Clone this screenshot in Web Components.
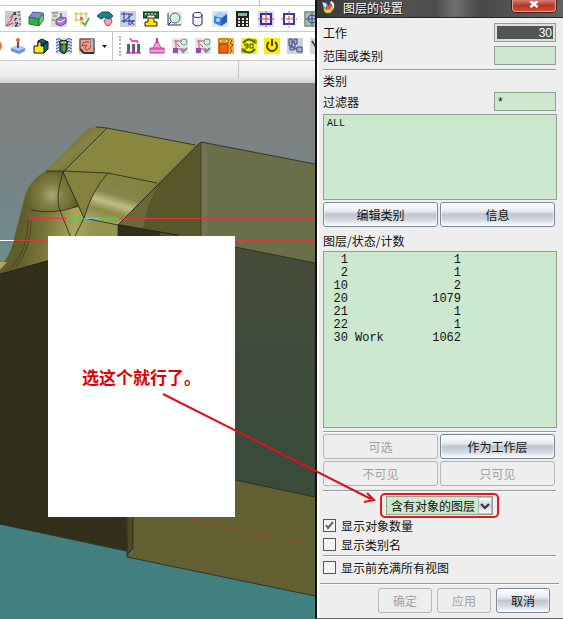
<!DOCTYPE html>
<html lang="zh-CN">
<head>
<meta charset="utf-8">
<title>图层的设置</title>
<style>
body{margin:0;font:12px/16px "Liberation Sans","Noto Sans CJK SC",sans-serif;color:#111}
</style>
</head>
<body>
<cad-app></cad-app>
<script>
const define=(name,html,setup)=>customElements.define(name,class extends HTMLElement{
  constructor(){
    super();
    const t=document.createElement('template');
    t.innerHTML=html;
    this.attachShadow({mode:'open'}).append(t.content.cloneNode(true));
  }
  connectedCallback(){if(setup)setup(this,this.shadowRoot)}
});

/* 16x16 toolbar glyphs */
const sq=c=>`<rect width="16" height="16" fill="${c}"/>`;
const icons={
  xyz:sq('#c9c9cf')+'<path d="M1 15L6 9L9 2M1 15L8 12M5 7L9 2" stroke="#d23c50" fill="none"/><path d="M9 1l2 3M11 1l-2 3M10 7l1 1 1-1M10 8v2M10 12h3l-3 3h3" stroke="#222" fill="none"/><path d="M13 1h2M13 4h2M14 8h2M14 13h2" stroke="#445"/>',
  box:'<path d="M1 6L5 1L15 2L11 8Z" fill="#8a86dc" stroke="#555a96"/><path d="M1 6L11 8V15L1 13Z" fill="#35ad47" stroke="#247a35"/><path d="M11 8L15 2L16 8L11 15Z" fill="#63d166" stroke="#247a35"/>',
  feat:sq('#dedce0')+'<path d="M1 2h6M2 5h4M1 9h3" stroke="#a7ab78" stroke-width="2"/><path d="M5 9l4-3 6 1v5l-5 3-5-2z" fill="#a97bc8" stroke="#6f4a98"/><path d="M6 10l4 1 4-3" stroke="#fff" fill="none"/><path d="M10 6V2" stroke="#8070a0" stroke-width="2"/>',
  grid:'<path d="M2 1V11M7 1V14M12 1V8M0 3H14M0 9H10" stroke="#e2b04e" fill="none"/><path d="M6 6h3v3H6z" fill="#e36a5a"/><path d="M8 11l3 3 4-7" stroke="#60b255" stroke-width="2" fill="none"/>',
  sheet:'<path d="M9 7l5 0 1 4-3 4-3-1-2-4z" fill="#f0a6b2" stroke="#a3506a"/><path d="M0 5L5 1L12 1L16 5L12 8L8 6L4 8Z" fill="#16838f" stroke="#0b4f61"/>',
  csys:sq('#cdd0df')+'<path d="M4 1V12M1 10H15M1 3L12 3M4 10L13 3M9 3V14M10 9l4 5M14 9l-4 5" stroke="#1d3ba6" fill="none"/>',
  caliper:'<path d="M0 1H16V7H12V4H4V7H0Z" fill="#167636" stroke="#111"/><path d="M3 2v2M6 2v2M9 2v2M12 2v2" stroke="#fff"/><path d="M5 7h6v4h3v4H2v-4h3z" fill="#ffe500" stroke="#222"/>',
  circ:'<rect x="2" width="14" height="14" fill="#e8eee9"/><path d="M2 2V14H15" stroke="#222a88" fill="none"/><circle cx="9" cy="7" r="5" fill="#d9f1df" stroke="#387261"/><path d="M2 14L5 11" stroke="#222a88"/>',
  cyl:'<path d="M4 4V13Q8 17 13 13V4" fill="#f4f4ff" stroke="#20206d"/><ellipse cx="8.500" cy="4" rx="4.500" ry="2.500" fill="#fff" stroke="#20206d"/>',
  cube:sq('#dfe5f1')+'<path d="M2 5l5-4 8 2v8l-6 4-7-3z" fill="#3d84dc"/><path d="M2 5l5-4 8 2-5 4z" fill="#a8d0f7"/><path d="M10 7l5-4v8l-6 4z" fill="#2160bb"/><circle cx="6" cy="9" r="2" fill="#b5dafa"/>',
  calc:'<rect x="1" width="13" height="16" fill="#232322"/><rect x="3" y="2" width="9" height="3" fill="#75bf8b"/><path d="M3 8h10M3 11h10M3 14h10" stroke="#f2e8d8" stroke-width="2" stroke-dasharray="2 2"/>',
  cross:sq('#dcd8e2')+'<rect x="3" y="3" width="10" height="10" fill="#eef" stroke="#2930a5" stroke-width="2"/><path d="M8 0V16M0 8H16" stroke="#df3a3a"/>',
  cross2:'<rect x="3" y="3" width="10" height="10" fill="#fff" stroke="#3438aa" stroke-width="2"/><path d="M8 0V16M0 8H16" stroke="#df3a3a" stroke-dasharray="4 1"/>',
  target:sq('#a8bea8')+'<circle cx="8" cy="8" r="4" fill="none" stroke="#3d48a4"/><path d="M8 1V15M1 8H15" stroke="#3d48a4"/><path d="M1 1h14v14H1z" fill="none" stroke="#6a8a75"/>',
  orange:'<circle cx="9" cy="8" r="6" fill="#ee7547"/>',
  joy:'<path d="M1 10l7-3 7 3v3l-6 3-8-3z" fill="#5d91dd"/><path d="M1 10l7-3 7 3-6 3z" fill="#b0cdf2"/><path d="M8 10V3" stroke="#8d443b" stroke-width="2"/><circle cx="8" cy="2" r="2" fill="#d9654e"/>',
  pad:'<path d="M5 3L9 1L15 4V11L11 15L5 12Z" fill="#087565" stroke="#111"/><path d="M10 6l5-2M10 6v8" stroke="#111a88" stroke-width="2"/><path d="M1 8h4V4h3v4h3v7H1z" fill="#ffe52e" stroke="#111"/>',
  thread:sq('#d4d9ee')+'<path d="M0 2q3-3 5 0t5 0 6 0M0 5q3-3 5 0t5 0 6 0M0 8q3-3 5 0t5 0 6 0M0 11q3-3 5 0t5 0 6 0M0 14q3-3 5 0t5 0 6 0" fill="none" stroke="#2856bb"/><path d="M4 3h7v9l-3 4-4-3z" fill="#298342" stroke="#111"/><path d="M4 3h7v3H4z" fill="#e6da57" stroke="#111"/><path d="M8 6v7" stroke="#8fc65c"/>',
  cavity:sq('#d5ccc8')+'<path d="M1 1h14v14H5L1 11z" fill="#e9a091" stroke="#3d3333"/><path d="M10 4H6Q3 5 3 8L8 7Q4 12 8 12Q12 11 12 7V2" fill="none" stroke="#a3433e"/><path d="M13 1v9" stroke="#9cc7c2" stroke-width="2"/><path d="M1 11l4 4h10" fill="none" stroke="#3d3333" stroke-width="2"/>',
  plant:'<path d="M1 15V6h3v9zM6 15V6h3v9zM11 15V6h3v9z" fill="#b431b4"/><path d="M3 6v6M8 6v6M13 6v6" stroke="#21863c" stroke-width="2"/><path d="M4 0l2 3h5l1 2" stroke="#e355c8" fill="none" stroke-width="2"/><path d="M0 15h15" stroke="#71286a"/>',
  cake:'<path d="M1 10h14v5H1z" fill="#e46ac5" stroke="#bd3f98"/><path d="M4 10l3-6h2l3 6z" fill="#f39bd5" stroke="#d14da9"/><path d="M8 0v5" stroke="#ce337a" stroke-width="2"/><path d="M1 13h14" stroke="#fbd4ee"/>',
  tree:sq('#e8e3e9')+'<path d="M2 3h7M4 3v8h8M5 6l3 3" stroke="#c24d6c" fill="none"/><circle cx="12" cy="4" r="3" fill="#d5f1d7" stroke="#55ad70"/><path d="M1 10h5v5H1z" fill="#8a54a3"/><path d="M9 11l2 3 4-4" stroke="#7e8c9e" fill="none" stroke-width="2"/>',
  post:sq('#f5b025')+'<path d="M1 1h9v4H1z" fill="#ffe77a" stroke="#8b4a16"/><path d="M1 6h9v9H1z" fill="#ef6413" stroke="#b53508"/><path d="M12 1l2 2-2 2 3 2-3 3 2 2-2 3" stroke="#a23b19" fill="none"/><path d="M3 3h5" stroke="#c45b15"/>',
  rotate:sq('#ffee21')+'<path d="M2 5Q8-2 14 5M14 11Q8 18 2 11" fill="none" stroke="#38751d" stroke-width="2"/><path d="M12 2h3v4M4 14H1v-4" fill="none" stroke="#38751d"/><path d="M7 8H4V6h3v4H4M9 6h3v4H9z" fill="none" stroke="#554313"/>',
  power:sq('#ffee00')+'<path d="M5 4A5 5 0 1 0 11 4M8 1V8" fill="none" stroke="#514600" stroke-width="2"/>',
  comps:sq('#cfd2de')+'<path d="M2 1h3v7H2zM7 1h3v5H7zM3 9h4v3H3zM10 9h5v5h-5z" fill="#a8b3d5" stroke="#303f82"/><path d="M5 4h2M8 6v5h2M5 8v1" stroke="#303f82" fill="none"/>',
  hammer:sq('#d8d8d8')+'<path d="M2 3l6 9" stroke="#444" stroke-width="2"/>',
  logo:'<path d="M2 3Q7 1 8 7T14 12L10 15Q2 14 2 3Z" fill="#3bb7e9"/><path d="M3 9Q8 12 14 5Q15 15 7 15Q3 14 3 9Z" fill="#b8db36"/><path d="M3 6Q8 10 11 3L13 5Q12 11 6 11Z" fill="#ed3d85"/><path d="M1 2L6 5L5 9ZM12 1Q17 4 14 11Q14 5 10 3Z" fill="#eef8ff"/><path d="M4 12Q9 15 14 8" stroke="#ffce25" stroke-width="2" fill="none"/>',
  caret:'<path d="M0 8h5l-2.500 3z" fill="#111"/>'
};

define('tool-icon',`<style>
:host{display:block;flex:none;width:16px;height:16px}
button{display:block;width:100%;height:100%;padding:0;border:0;background:none}
svg{display:block;width:100%;height:100%}
</style><button type="button"><svg></svg></button>`,(el,r)=>{
  const s=r.querySelector('svg'),n=el.getAttribute('name');
  s.setAttribute('viewBox',el.getAttribute('view')||'0 0 16 16');
  s.innerHTML=icons[n];
  r.querySelector('button').setAttribute('aria-label',n);
});

define('tool-row',`<style>
:host{display:flex;align-items:center;overflow:hidden;background:#fff;border-bottom:1px solid #c9c9c9;box-sizing:border-box}
div{display:flex;flex:none;gap:7px}
.grip{width:17px;height:100%;box-sizing:border-box;gap:0;padding-left:3px;align-items:center}
.grip i{height:28px;border-left:1px solid #c4c4c4;margin-right:6px}
.grip b{height:20px;border-left:2px dotted #b5b5b5}
[hidden]{display:none}
</style><div><slot></slot></div><div class="grip"><i></i><b></b></div><div><slot name="more"></slot></div>`,(el,r)=>{
  if(!el.querySelector('[slot=more]'))r.querySelector('.grip').hidden=true;
});

define('cad-toolbars',`<style>
:host{display:block;min-width:0}
.edge{height:5px;background:#fff;border-bottom:1px solid #c9c9c9;display:flex;justify-content:flex-end}
.edge i{border-left:1px solid #c4c4c4;width:55px}
tool-row{height:26px;padding-left:5px}
.second{height:29px;padding-left:0}
.second .part{width:3px}
.second .arrow{width:5px;margin-right:2px}
.status{height:22px;background:linear-gradient(#f8f8f8,#e9e9e9 70%,#cfcfcf);display:flex;justify-content:flex-end}
.status i{width:76px;height:18px;border-left:1px solid #c6c6c6}
</style>
<div class="edge"><i></i></div>
<tool-row>${['xyz','box','feat','grid','sheet','csys','caliper','circ','cyl','cube','calc','cross','cross2','target'].map(n=>`<tool-icon name="${n}"></tool-icon>`).join('')}</tool-row>
<tool-row class="second"><tool-icon class="part" name="orange" view="13 0 3 16"></tool-icon>${['joy','pad','thread','cavity'].map(n=>`<tool-icon name="${n}"></tool-icon>`).join('')}<tool-icon class="arrow" name="caret" view="0 1 5 16"></tool-icon>${['plant','cake','tree','tree','post','rotate','power','comps','hammer'].map(n=>`<tool-icon slot="more" name="${n}"></tool-icon>`).join('')}</tool-row>
<div class="status"><i></i></div>`);

define('cad-scene',`<style>
:host{display:block;position:relative;min-height:0;min-width:0;overflow:hidden;background:#41807f}
svg{position:absolute;inset:0;display:block;width:100%;height:100%}
</style>
<svg viewBox="0 83 315 536" preserveAspectRatio="xMinYMin slice" role="img" aria-label="三维模型">
<defs>
<linearGradient id="sky" x2="0" y2="1"><stop stop-color="#808080"/><stop offset=".12" stop-color="#7b8383"/><stop offset=".35" stop-color="#6b8c90"/><stop offset=".8" stop-color="#43807f"/><stop offset="1" stop-color="#408080"/></linearGradient>
<linearGradient id="green" x2="0" y2="1"><stop stop-color="#484b3b"/><stop offset=".5" stop-color="#3e4b3a"/><stop offset="1" stop-color="#394b39"/></linearGradient>
<linearGradient id="round" x1="0" y1="0" x2="1" y2="1"><stop stop-color="#5d5b2a"/><stop offset=".5" stop-color="#858341"/><stop offset="1" stop-color="#6c692f"/></linearGradient>
<linearGradient id="shine" gradientUnits="userSpaceOnUse" x1="115" y1="178" x2="102" y2="222"><stop stop-color="#858341"/><stop offset=".35" stop-color="#88864a"/><stop offset=".55" stop-color="#c1bd86"/><stop offset=".75" stop-color="#8d8948"/><stop offset="1" stop-color="#aaa65f"/></linearGradient>
<linearGradient id="skirt" gradientUnits="userSpaceOnUse" x1="20" y1="235" x2="90" y2="245"><stop stop-color="#5f5d2a"/><stop offset=".35" stop-color="#787638"/><stop offset=".75" stop-color="#aaa763"/><stop offset="1" stop-color="#969250"/></linearGradient>
<radialGradient id="ball" gradientUnits="userSpaceOnUse" cx="52" cy="195" r="29"><stop stop-color="#aaa875"/><stop offset=".4" stop-color="#817e43"/><stop offset="1" stop-color="#5c5929"/></radialGradient>
</defs>
<rect y="83" width="315" height="536" fill="url(#sky)"/>
<path d="M0 262L6 261Q12 250 15 235L24 198Q28 181 46 171L80 137Q87 127 96 127L107 128L195 145L201 142V240H48L0 275Z" fill="#777538"/>
<path d="M201 142L315 164V264L235 247L201 240Z" fill="#6a6e49"/>
<path d="M96 127L107 128L63 172H46L80 137Q87 127 96 127Z" fill="url(#round)"/>
<path d="M107 128L195 145L157 183L108 173L63 172Z" fill="#89873f"/>
<path d="M63 172L108 173L157 183L118 225L84 218Z" fill="url(#shine)"/>
<path d="M63 172L108 173Q92 190 84 218Z" fill="#84823d"/>
<path d="M46 171H63L79 206Q50 218 29 210Q24 204 25 197Q30 180 46 171Z" fill="url(#ball)"/>
<path d="M25 198Q28 211 45 213L78 207L84 218L118 225V242H48V261L0 275V267Q11 256 15 235Z" fill="url(#skirt)"/>
<path d="M0 262H7L0 270Z" fill="#aaa65f"/>
<path d="M201 142L118 225L178 236L207 240Z" fill="#58582c"/>
<path d="M160 183L118 225L143 230Q145 205 160 183Z" fill="#6b693a"/>
<path d="M201 142V237L207 240V147Z" fill="#727351"/>
<path d="M0 274L118 240V224L178 235L150 545L128 551L0 524Z" fill="#32301a"/>
<path d="M160 232L235 247L315 263V497L235 480L160 470Z" fill="url(#green)"/>
<path d="M133 480L235 480L315 497V596L127 557L133 552Z" fill="#636033"/>
<path d="M126 517H133V549L127 557Z" fill="#4d4b25"/>
<g fill="none" stroke="#25251a">
<path d="M96 127L107 128L195 145M201 142L315 164M201 142L118 225M107 128L63 172M46 171H63L108 173L157 183M63 172L84 218L118 225V238M63 172Q54 200 61 213L71 238M108 173Q92 190 84 218L74 238M78 206Q55 215 31 210M118 225L178 235M235 247L315 263M235 480L315 497M0 524L126 551M127 517V557L315 596M133 517V549L128 553M0 274L48 261" stroke-opacity=".8"/>
<path d="M28 220Q28 250 12 267M31 221Q31 249 16 266M201 142V237" stroke-opacity=".5"/>
</g>
<path d="M28 218.500H315M14 240.500H315" stroke="#d43b3b"/>
<path d="M67 218.500H83M99 218.500H119" stroke="#55cc45"/><path d="M84 218.500H99" stroke="#70cadb"/>
<path d="M0 240.500H14" stroke="#fff"/>
<path d="M180 518L304 544" stroke="#b13c25" stroke-dasharray="22 11" stroke-dashoffset="-8"/>
</svg>`);

define('paper-note',`<style>
:host{display:flex;align-items:center;justify-content:center;background:#fff;color:#e00000;font:bold 17px/24px "Noto Sans CJK SC",sans-serif;white-space:nowrap}
</style><slot></slot>`);

define('field-row',`<style>
:host{display:block}
label{display:flex;align-items:center;justify-content:space-between;min-height:19px}
:host([bare]) label{min-height:17px}
input{box-sizing:border-box;width:62px;height:19px;margin:0;padding:0 3px;border:1px solid #8fa191;border-radius:0;background:#cce8cf;color:#111;font:12px/16px "Liberation Sans",sans-serif;outline:0}
:host([active]) input{text-align:right;background:#525552;color:#fff;box-shadow:inset 0 0 0 2px #dde3de;padding-right:3px}
</style><label><slot></slot><input type="text"></label>`,(el,r)=>{
  const i=r.querySelector('input');
  if(el.hasAttribute('value'))i.value=el.getAttribute('value');else if(el.hasAttribute('bare'))i.remove();
});

define('metal-button',`<style>
:host{display:block;min-width:0}
button{display:block;box-sizing:border-box;width:100%;height:25px;padding:0;border:1px solid #7a8a99;border-radius:3px;background:linear-gradient(#fff,#e8ebef 35%,#bfc6d0 50%,#cfd5dd 70%,#fff);color:#111;font:12px/16px "Noto Sans CJK SC",sans-serif;box-shadow:inset 0 0 0 1px #ffffff80}
button:disabled{background:#eee;color:#a2a2a2;border-color:#b5b5b5;box-shadow:none}
</style><button type="button"><slot></slot></button>`,(el,r)=>{r.querySelector('button').disabled=el.hasAttribute('disabled')});

define('check-row',`<style>
:host{display:block}
label{display:flex;align-items:center;gap:5px;height:19px}
input{appearance:none;box-sizing:border-box;width:13px;height:13px;margin:0;border:1px solid #555;background:#f4f4f4}
input:checked{background:#f4f4f4 url("data:image/svg+xml,%3Csvg xmlns='http://www.w3.org/2000/svg' viewBox='0 0 11 11'%3E%3Cpath d='M2 5L4 8L9 2' fill='none' stroke='%23666' stroke-width='2'/%3E%3C/svg%3E")}
</style><label><input type="checkbox"><slot></slot></label>`,(el,r)=>{r.querySelector('input').checked=el.hasAttribute('checked')});

define('layer-filter',`<style>
:host{display:block;border:2px solid #e01822;border-radius:5px;padding:1px 4px}
select{display:block;appearance:none;box-sizing:border-box;width:107px;height:19px;padding:0 0 0 4px;border:1px solid #8fa191;border-radius:0;color:#111;font:12px/16px "Noto Sans CJK SC",sans-serif;
background:url("data:image/svg+xml,%3Csvg xmlns='http://www.w3.org/2000/svg' viewBox='0 0 14 17'%3E%3Cdefs%3E%3ClinearGradient id='g' x2='0' y2='1'%3E%3Cstop stop-color='white'/%3E%3Cstop offset='.5' stop-color='%23ccd3dc'/%3E%3Cstop offset='1' stop-color='white'/%3E%3C/linearGradient%3E%3C/defs%3E%3Cpath d='M0 0H14V17H0Z' fill='url(%23g)' stroke='%237a8a99'/%3E%3Cpath d='M3 7L7 11L11 7' fill='none' stroke='%23333' stroke-width='2'/%3E%3C/svg%3E") right/14px 17px no-repeat,#cce8cf}
</style><select aria-label="图层筛选"><option>含有对象的图层</option></select>`);

define('layer-table',`<style>
:host{display:block;box-sizing:border-box;border:1px solid #8fa191;background:#cce8cf;padding:2px 0 0 6px}
table{border-collapse:collapse;font:12px/13px "Liberation Mono",monospace}
td{padding:0;height:13px}
td:nth-child(1){width:18px;text-align:right}
td:nth-child(2){width:60px;padding-left:7px}
td:nth-child(3){width:46px;text-align:right}
</style><table aria-label="图层"><tbody></tbody></table>`,(el,r)=>{
  const rows=[[1,'',1],[2,'',1],[10,'',2],[20,'',1079],[21,'',1],[22,'',1],[30,'Work',1062]];
  r.querySelector('tbody').innerHTML=rows.map(x=>`<tr>${x.map(c=>`<td>${c}</td>`).join('')}</tr>`).join('');
});

define('layer-dialog',`<style>
:host{display:flex;flex-direction:column;box-sizing:border-box;border-left:2px solid #111;border-bottom:1px solid #666;background:#eee;font-family:"Noto Sans CJK SC",sans-serif}
header{display:flex;align-items:flex-start;height:17px;padding:0 7px 0 3px;background:linear-gradient(90deg,#383838,#555 30%,#4c4c4c 48%,#707070 56%,#484848 66%,#626262);border-bottom:1px solid #222;color:#fff}
header tool-icon{height:14px}
h1{flex:1;margin:0 0 0 7px;font-size:12px;line-height:16px;font-weight:400;text-shadow:1px 1px #111}
.close{width:44px;height:12px;padding:0;border:1px solid #e2a394;border-top:0;border-radius:0 0 4px 4px;background:linear-gradient(#cf8174,#b93522 50%,#ce4c32);box-shadow:0 0 0 1px #411c18}
.close svg{display:block;margin:0 auto 3px;width:12px;height:7px}
main{display:flex;flex-direction:column;flex:1;padding:5px 6px 0 4px;border-left:2px solid #fff}
main>*{margin-right:1px}
hr{margin:4px 1px 4px 0;border:0;border-top:1px solid #9b9b9b;border-bottom:1px solid #fafafa}
.fields{display:grid;gap:4px}
.after-fields{margin-bottom:1px}
.category{margin-bottom:3px}
.list{box-sizing:border-box;height:86px;margin:3px 0 2px;padding:1px 3px;border:1px solid #8fa191;background:#cce8cf;list-style:none;font:10px/16px "Liberation Mono",monospace}
.pair{display:grid;grid-template-columns:1fr 1fr;gap:2px;margin-right:2px}
h2{margin:6px 0 2px;font-size:12px;line-height:16px;font-weight:400}
layer-table{min-height:177px;margin-right:0}
.after-table{margin-top:3px;margin-bottom:1px}
.after-pair{margin-bottom:1px}
.filter{display:flex;justify-content:center;margin-bottom:-2px}
.tight{margin:1px 1px 1px 0}
footer{display:grid;grid-template-columns:54px 54px 54px;gap:5px;justify-content:end;padding-right:6px}
.foot{margin:6px -2px 3px -3px}
</style>
<header><tool-icon name="logo"></tool-icon><h1>图层的设置</h1><button class="close" type="button" aria-label="关闭"><svg viewBox="0 0 12 8"><path d="M2 0L10 7M10 0L2 7" stroke="#fff" stroke-width="3"/></svg></button></header>
<main>
<div class="fields"><field-row active value="30">工作</field-row><field-row value="">范围或类别</field-row></div>
<hr class="after-fields">
<field-row class="category" bare>类别</field-row>
<field-row value="*">过滤器</field-row>
<ul class="list" role="listbox" aria-label="类别"><li role="option">ALL</li></ul>
<div class="pair"><metal-button>编辑类别</metal-button><metal-button>信息</metal-button></div>
<h2>图层/状态/计数</h2>
<layer-table></layer-table>
<hr class="after-table">
<div class="pair"><metal-button disabled>可选</metal-button><metal-button>作为工作层</metal-button><metal-button disabled>不可见</metal-button><metal-button disabled>只可见</metal-button></div>
<hr class="after-pair">
<div class="filter"><layer-filter></layer-filter></div>
<check-row checked>显示对象数量</check-row>
<check-row>显示类别名</check-row>
<hr class="tight">
<check-row>显示前充满所有视图</check-row>
<hr class="foot">
<footer><metal-button disabled>确定</metal-button><metal-button disabled>应用</metal-button><metal-button>取消</metal-button></footer>
</main>`);

define('cad-app',`<style>
:host{position:relative;display:grid;grid-template-columns:minmax(0,1fr) 248px;min-height:100vh;overflow:hidden}
.work{display:grid;grid-template-columns:minmax(0,1fr);grid-template-rows:auto minmax(0,1fr);min-width:0}
paper-note{position:absolute;left:48px;top:236px;width:187px;height:281px}
.arrow{position:absolute;left:0;top:0;width:563px;height:619px;pointer-events:none}
</style>
<div class="work"><cad-toolbars></cad-toolbars><cad-scene></cad-scene></div>
<layer-dialog></layer-dialog>
<paper-note>选这个就行了。</paper-note>
<svg class="arrow" viewBox="0 0 563 619" aria-hidden="true"><path d="M163 394L371 499M367 493L374 500L364 502" fill="none" stroke="#df101c" stroke-width="2"/></svg>`);
</script>
</body>
</html>
